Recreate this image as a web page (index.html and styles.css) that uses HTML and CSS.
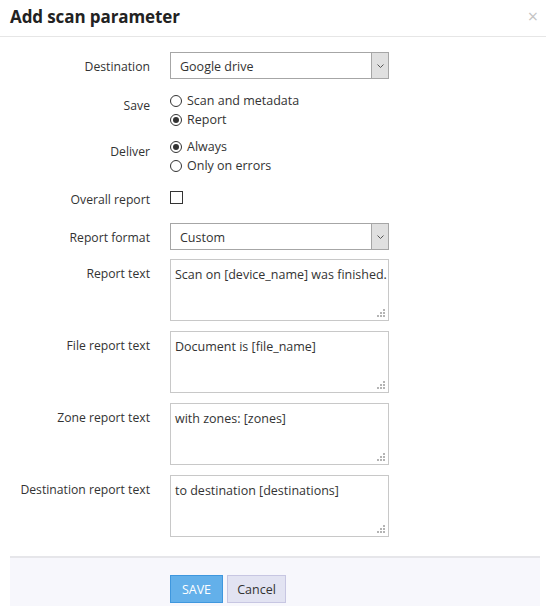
FILE: index.html
```html
<!DOCTYPE html>
<html>
<head>
<meta charset="utf-8">
<link rel="stylesheet" href="styles.css">
</head>
<body>
<div class="dialog">
  <div class="header">
    <div class="title">Add scan parameter</div>
    <div class="close">×</div>
  </div>
  <div class="form">
    <div class="row r-dest">
      <div class="label lbl-select">Destination</div>
      <div class="select">
        <span class="sel-text">Google drive</span>
        <span class="sel-arrow"><svg width="9" height="6" viewBox="0 0 9 6"><path d="M1.5 1.5 L4.5 4.5 L7.5 1.5" fill="none" stroke="#555" stroke-width="1"/></svg></span>
      </div>
    </div>
    <div class="row r-save">
      <div class="label lbl-radio">Save</div>
      <div class="options">
        <div class="opt"><span class="radio"></span>Scan and metadata</div>
        <div class="opt"><span class="radio checked"></span>Report</div>
      </div>
    </div>
    <div class="row r-deliver">
      <div class="label lbl-radio">Deliver</div>
      <div class="options">
        <div class="opt"><span class="radio checked"></span>Always</div>
        <div class="opt"><span class="radio"></span>Only on errors</div>
      </div>
    </div>
    <div class="row r-overall">
      <div class="label lbl-check">Overall report</div>
      <div class="options">
        <div class="opt"><span class="checkbox"></span></div>
      </div>
    </div>
    <div class="row r-format">
      <div class="label lbl-select">Report format</div>
      <div class="select">
        <span class="sel-text">Custom</span>
        <span class="sel-arrow"><svg width="9" height="6" viewBox="0 0 9 6"><path d="M1.5 1.5 L4.5 4.5 L7.5 1.5" fill="none" stroke="#555" stroke-width="1"/></svg></span>
      </div>
    </div>
    <div class="row r-text first">
      <div class="label lbl-area">Report text</div>
      <div class="area">Scan on [device_name] was finished.<span class="grip"><svg width="8" height="8" viewBox="0 0 8 8"><g fill="#b4b4b4"><rect x="6" y="0" width="2" height="2"/><rect x="3" y="3" width="2" height="2"/><rect x="6" y="3" width="2" height="2"/><rect x="0" y="6" width="2" height="2"/><rect x="3" y="6" width="2" height="2"/><rect x="6" y="6" width="2" height="2"/></g></svg></span></div>
    </div>
    <div class="row r-text">
      <div class="label lbl-area">File report text</div>
      <div class="area">Document is [file_name]<span class="grip"><svg width="8" height="8" viewBox="0 0 8 8"><g fill="#b4b4b4"><rect x="6" y="0" width="2" height="2"/><rect x="3" y="3" width="2" height="2"/><rect x="6" y="3" width="2" height="2"/><rect x="0" y="6" width="2" height="2"/><rect x="3" y="6" width="2" height="2"/><rect x="6" y="6" width="2" height="2"/></g></svg></span></div>
    </div>
    <div class="row r-text">
      <div class="label lbl-area">Zone report text</div>
      <div class="area">with zones: [zones]<span class="grip"><svg width="8" height="8" viewBox="0 0 8 8"><g fill="#b4b4b4"><rect x="6" y="0" width="2" height="2"/><rect x="3" y="3" width="2" height="2"/><rect x="6" y="3" width="2" height="2"/><rect x="0" y="6" width="2" height="2"/><rect x="3" y="6" width="2" height="2"/><rect x="6" y="6" width="2" height="2"/></g></svg></span></div>
    </div>
    <div class="row r-text">
      <div class="label lbl-area">Destination report text</div>
      <div class="area">to destination [destinations]<span class="grip"><svg width="8" height="8" viewBox="0 0 8 8"><g fill="#b4b4b4"><rect x="6" y="0" width="2" height="2"/><rect x="3" y="3" width="2" height="2"/><rect x="6" y="3" width="2" height="2"/><rect x="0" y="6" width="2" height="2"/><rect x="3" y="6" width="2" height="2"/><rect x="6" y="6" width="2" height="2"/></g></svg></span></div>
    </div>
  </div>
  <div class="footer">
    <button class="btn btn-save">SAVE</button>
    <button class="btn btn-cancel">Cancel</button>
  </div>
</div>
</body>
</html>
```

FILE: styles.css
```css
html, body {
  margin: 0;
  padding: 0;
  background: #ffffff;
}
body {
  font-family: "Open Sans", "Noto Sans", sans-serif;
  font-size: 12px;
  color: #333333;
  height: 606px;
  overflow: hidden;
}
.dialog {
  display: flex;
  flex-direction: column;
  height: 606px;
}
.header {
  height: 37px;
  box-sizing: border-box;
  border-bottom: 1px solid #e6e6e6;
  display: flex;
  align-items: center;
  justify-content: space-between;
  padding: 0 8px 4px 10px;
}
.title {
  font-size: 17px;
  font-weight: 700;
  color: #222222;
  letter-spacing: -0.1px;
}
.close {
  font-size: 18px;
  color: #c4c4c4;
  line-height: 1;
}
.form {
  padding-top: 15px;
}
.row {
  display: flex;
  align-items: flex-start;
}
.label {
  width: 150px;
  text-align: right;
  margin-right: 20px;
  line-height: 19px;
  flex: none;
  font-size: 12.2px;
}
.lbl-select { padding-top: 5px; }
.lbl-radio { padding-top: 5px; }
.lbl-check { padding-top: 3px; }
.lbl-area { padding-top: 5px; }

.r-save { margin-top: 12px; }
.r-deliver { margin-top: 8px; }
.r-overall { margin-top: 12px; }
.r-format { margin-top: 14px; }
.r-text { margin-top: 10px; }
.r-text.first { margin-top: 9px; }

.select {
  width: 219px;
  height: 27px;
  box-sizing: border-box;
  border: 1px solid #a6a6a6;
  display: flex;
  align-items: stretch;
}
.sel-text {
  flex: 1;
  padding: 2px 0 0 9px;
  line-height: 24px;
  font-size: 12.5px;
}
.sel-arrow {
  width: 16px;
  background: #e0e0e0;
  border-left: 1px solid #a6a6a6;
  display: flex;
  align-items: center;
  justify-content: center;
}
.options {
  display: flex;
  flex-direction: column;
}
.opt {
  display: flex;
  align-items: center;
  height: 19px;
  font-size: 12.5px;
}
.radio {
  width: 12px;
  height: 12px;
  box-sizing: border-box;
  border: 1px solid #333333;
  border-radius: 50%;
  margin-right: 5px;
  position: relative;
  flex: none;
}
.radio.checked::after {
  content: "";
  position: absolute;
  left: 2px;
  top: 2px;
  width: 6px;
  height: 6px;
  border-radius: 50%;
  background: #333333;
}
.checkbox {
  width: 13px;
  height: 13px;
  box-sizing: border-box;
  border: 1px solid #333333;
  margin-top: 1px;
}
.area {
  width: 219px;
  height: 62px;
  box-sizing: border-box;
  border: 1px solid #c8c8c8;
  padding: 5px 4px;
  line-height: 19px;
  font-size: 12.5px;
  position: relative;
  white-space: nowrap;
}
.grip {
  position: absolute;
  right: 3px;
  bottom: 3px;
  width: 8px;
  height: 8px;
  display: block;
  line-height: 0;
}
.footer {
  margin: 19px 6px 0 10px;
  border-top: 2px solid #e6e6ea;
  background: #f7f7fc;
  flex: 1;
  padding: 17px 0 0 160px;
  display: flex;
  align-items: flex-start;
  gap: 4px;
}
.btn {
  height: 28px;
  box-sizing: border-box;
  font-family: "Open Sans", "Noto Sans", sans-serif;
  font-size: 12.5px;
  padding: 0;
  margin: 0;
  cursor: pointer;
}
.btn-save {
  width: 53px;
  background: #63b0ea;
  border: 1px solid #3f97de;
  color: #ffffff;
}
.btn-cancel {
  width: 59px;
  background: #e2e3f2;
  border: 1px solid #c7c6e2;
  color: #333333;
}
```
